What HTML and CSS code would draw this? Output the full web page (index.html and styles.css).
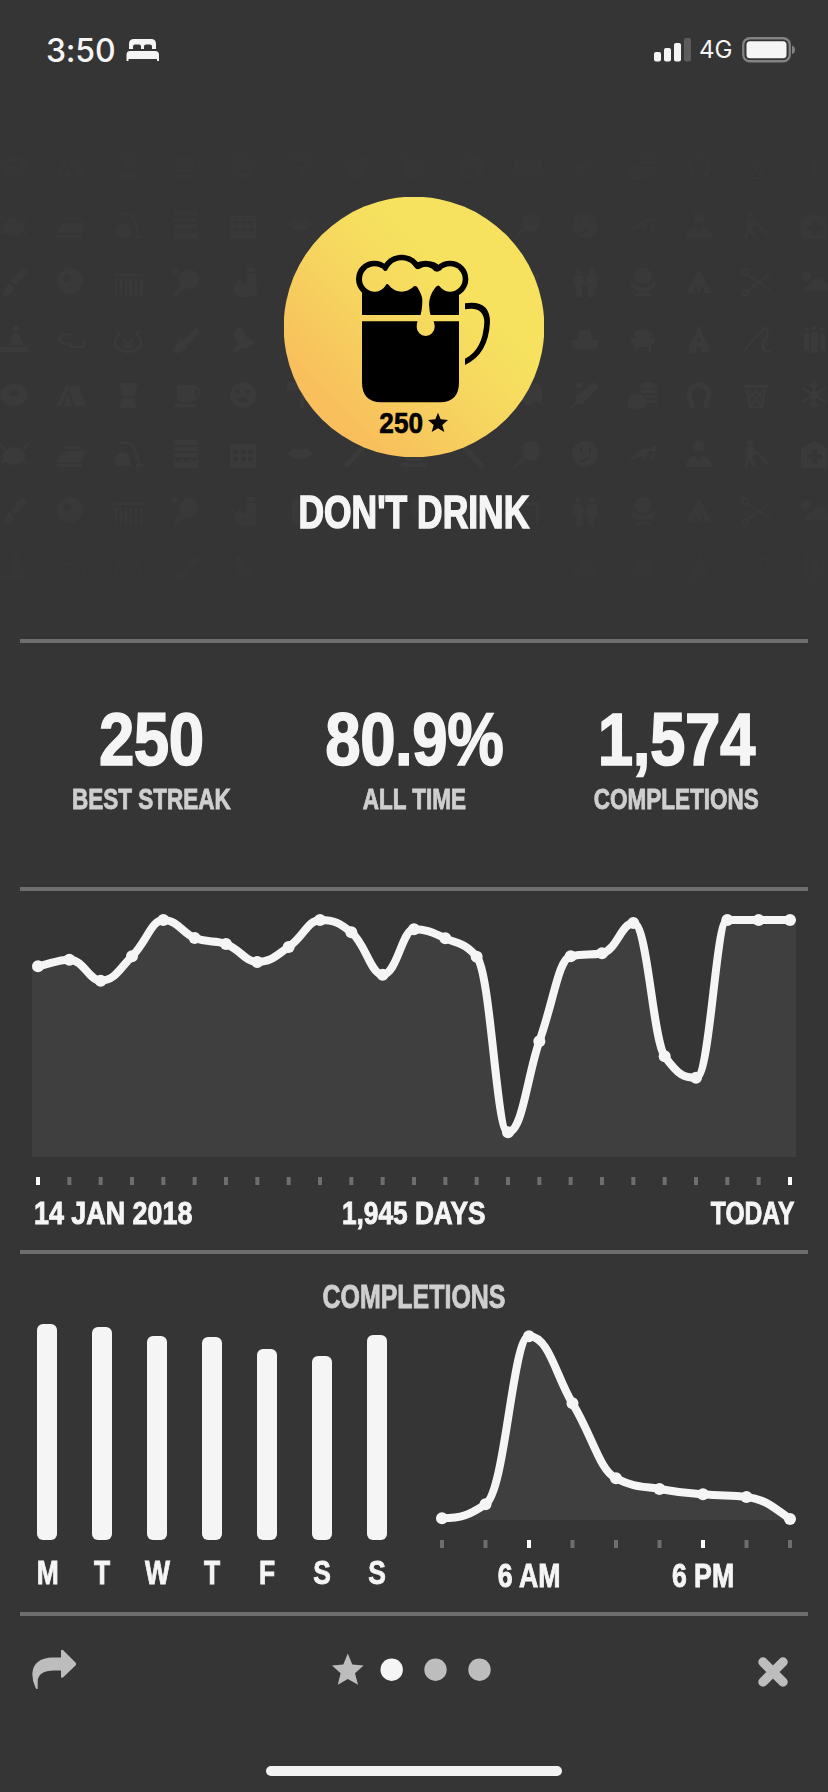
FILE: index.html
```html
<!DOCTYPE html>
<html lang="en">
	<head>
		<meta charset="utf-8">
		<title>Don't Drink</title>
		<link rel="stylesheet" href="styles.css">
	</head>
	<body>

		<header class="status">
			<span class="time">3:50</span>
			<svg class="bed" width="33" height="24" viewBox="0 0 33 24">
				<path d="M3 11V6q0-5 5-5h17q5 0 5 5v5h-4V8.500q0-2-2-2h-4q-2 0-2 2V11h-3V8.500q0-2-2-2H9q-2 0-2 2V11z"/>
				<path d="M4 13h25q4 0 4 4v6h-2v-2H2.500v2H.5v-6q0-4 3.500-4z"/>
			</svg>
			<svg class="signal" width="38" height="24" viewBox="0 0 38 24">
				<rect x="0" y="14" width="7" height="9.500" rx="2"/>
				<rect x="10" y="10" width="7" height="13.500" rx="2"/>
				<rect x="20" y="5" width="7" height="18.500" rx="2"/>
				<rect class="dim" x="30" y="0" width="7" height="23.500" rx="2"/>
			</svg>
			<span class="network">4G</span>
			<svg class="battery" width="54" height="26" viewBox="0 0 54 26">
				<rect x="1.250" y="1.250" width="46.500" height="23" rx="6.500" fill="none" stroke="#828282" stroke-width="2.300"/>
				<rect x="4.500" y="4.300" width="40" height="17" rx="3.500"/>
				<path d="M50 8.500q3 1 3 4.300t-3 4.300z" fill="#828282"/>
			</svg>
		</header>

		<section class="hero">
			<svg class="pattern" width="828" height="480" viewBox="0 140 828 480">
				<defs>
					<!-- four rows of icons, repeated below -->
					<g id="tile">
						<!-- row 1 -->
						<g transform="translate(14 166)"><path fill-rule="evenodd" d="M-14 0a14 11 0 1 0 28 0a14 11 0 1 0-28 0M-5-2a5 3 0 1 0 10 0a5 3 0 1 0-10 0"/></g>
						<g transform="translate(71 166)"><path d="M-6-9H8l7 20H4L-2-6l-8 17h-4zM-3-2l4 13h-8z"/></g>
						<g transform="translate(128 166)"><path d="M-10-12H10l-3 13H-6l-2-9zM-6 3H6l3 10H-9z"/></g>
						<g transform="translate(186 166)"><path d="M-9-10H9V3q-2 4-5 4h-8q-4 0-5-4zM-12 9h22v3h-22z"/><path class="line" d="M9-7q6 1 4 6T8 4"/></g>
						<g transform="translate(243 166)"><path fill-rule="evenodd" d="M0-13a13 13 0 1 0 .1 0M-8-5h5v3h-5zM3-5h5v3H3zM-5 7a5 5 0 0 1 10 0z"/></g>
						<g transform="translate(300 166)"><path d="M-13-13H11v8h-24zM0 0h4v13H0z"/><path class="line" d="M11-9h3v6L2-1"/></g>
						<g transform="translate(357 166)"><path d="M0 14C-20 2-12-12-5-10q4 1 5 4q1-3 5-4C12-12 20 2 0 14z"/></g>
						<g transform="translate(414 166)"><circle r="11" cy="2"/><circle r="4" cx="-9" cy="-8"/><circle r="4" cx="9" cy="-8"/></g>
						<g transform="translate(471 166)"><path fill-rule="evenodd" d="M0-13a13 13 0 1 0 .1 0M-6-5h3v3h-3zM3-5h3v3H3zM-7 3a7 7 0 0 0 14 0z"/></g>
						<g transform="translate(528 166)"><path d="M-14-8l6-5 8 6 8-6 6 5v18l-7-4-7 5-7-5-7 4z"/></g>
						<g transform="translate(585 166)"><path d="M9-13l5 5L-3 9l-6 0-5 5-1-1 6-7 0-5z"/><circle r="3" cx="-6" cy="-10"/></g>
						<g transform="translate(643 166)"><ellipse cx="5" cy="-9" rx="9" ry="4"/><path d="M-3-5h17v3H-3zM3 0h11v3H3zM3 5h11v3H3z"/><ellipse cx="-6" cy="3" rx="9" ry="4"/><path d="M-15 5H3v7q-9 5-18 0z"/></g>
						<g transform="translate(699 166)"><path class="thick" d="M-7 13v-5q-5-8-2-13q9-11 18 0q3 5-2 13v5"/></g>
						<g transform="translate(756 166)"><path d="M-12-10h24v3h-24z"/><path class="line" d="M-9-6l3 18H6L9-6M-6-4L5 10M6-4L-5 10M-1-5l7 8M1-5l-8 8"/></g>
						<g transform="translate(814 166)"><path class="line" d="M0-14v28M-12-7L12 7M12-7L-12 7M-4-11l4 4 4-4M-4 11l4-4 4 4"/><circle r="4"/></g>
						<!-- row 2 -->
						<g transform="translate(14 225)"><ellipse rx="11" ry="9" cy="2"/><path class="line" d="M-9-4l-5-6M9-4l5-6M-9 6l-4 3M9 6l4 3"/></g>
						<g transform="translate(71 225)"><path d="M-8-8H10v3H-5zM-14 8q2-10 10-11H14L11 8zM-14 10h25v3h-25z"/></g>
						<g transform="translate(128 225)"><path d="M-13 12q-1-14 8-14q8 1 8 14zM8 10h7v3H8z"/><path class="line" d="M-8-11q12-2 14 5l5 15"/></g>
						<g transform="translate(186 225)"><path d="M-12-14H12v5h-24zM-12-7H12v4h-24zM-12-1H12v4h-24zM-12 5l4 4 4-4 4 4 4-4 4 4 4-4v9h-24z"/></g>
						<g transform="translate(243 225)"><path fill-rule="evenodd" d="M-13-10h26v24h-26zM-10-4h5v4h-5zM-2-4h5v4h-5zM5-4h5v4H5zM-10 3h5v4h-5zM-2 3h5v4h-5zM5 3h5v4H5z"/></g>
						<g transform="translate(300 225)"><path d="M-13 0q7-7 10-5l3 1 3-1q4-2 10 5q-13 11-26 0z"/></g>
						<g transform="translate(357 225)"><path class="thick" d="M-12 13L10-11"/></g>
						<g transform="translate(414 225)"><path d="M-13 9h26v4h-26zM-8 2H8v5H-8z"/></g>
						<g transform="translate(471 225)"><path class="thick" d="M-9-9L12 13"/></g>
						<g transform="translate(528 225)"><ellipse cx="3" cy="-3" rx="9" ry="10"/><path class="line" d="M-4 4l-10 10"/></g>
						<g transform="translate(585 225)"><path fill-rule="evenodd" d="M0-13a13 13 0 1 0 .1 0M-5-6h2v5h-2zM4-6h2v5H4zM-5 7l9-4v2l-8 4z"/></g>
						<g transform="translate(643 225)"><path d="M-15 6L0-5l9-1 2 3-7 1-1 7h-3V1L-7 5zM8 5l2-6 2 0-1 6z"/><circle r="3" cx="11" cy="-5"/></g>
						<g transform="translate(699 225)"><circle r="6" cy="-8"/><path d="M-13 13q0-10 9-11L0 8l4-6q9 1 9 11z"/></g>
						<g transform="translate(756 225)"><circle r="3" cx="-6" cy="-11"/><path d="M-9-7h6l3 7-2 1-2 2 5 10h-4L-7 6l-2 8h-3l3-10v-6l-3 2z"/><path class="line" d="M0-3l13 15"/></g>
						<g transform="translate(814 225)"><path fill-rule="evenodd" d="M-13-6L0-13l13 7v20h-26zM-2-5h5v5h5v5H3v5h-5V5h-5V0h5z"/></g>
						<!-- row 3 -->
						<g transform="translate(14 282)"><path d="M8-14l6 4L2 3-4-1zM-5 1l5 4q-1 9-12 9 3-9 7-13z"/></g>
						<g transform="translate(71 282)"><path fill-rule="evenodd" d="M-1-14a13 13 0 1 0 .1 0M-4-8a4 4 0 1 0 .1 0"/></g>
						<g transform="translate(128 282)"><path class="line" d="M-13-7h28M-12-3v17M-7-3v17M-2-3v17M3-3v17M8-3v17M13-3v17"/></g>
						<g transform="translate(186 282)"><circle r="10" cx="3" cy="-3"/><path d="M-5 2l4 4-9 9-3-3z"/><circle r="3" cx="-11" cy="-11"/></g>
						<g transform="translate(243 282)"><path d="M-14-1L-8 3l4-5 5 5 3-2v-9h9l1 21q-12 4-18 1-7-2-6-15zM4-14h8v4H4z"/></g>
						<g transform="translate(300 282)"><path d="M-8-12h7V6q9 1 10 7H-8z"/></g>
						<g transform="translate(357 282)"><path class="line" d="M-12 4a12 12 0 0 1 24 0M-5 4a5 5 0 0 1 10 0"/></g>
						<g transform="translate(414 282)"><path d="M-3-12h8L4 0l-4 12-3-12z"/></g>
						<g transform="translate(471 282)"><path d="M0-12l12 10L0 12-12-2z"/></g>
						<g transform="translate(528 282)"><path class="line" d="M-12-7h24M-9-7v20M9-7v20"/></g>
						<g transform="translate(585 282)"><circle r="3" cx="-7" cy="-11"/><circle r="3" cx="7" cy="-11"/><path d="M-11-7h8l3 8 3-8h8l2 11h-3l-1 11H3L2 0l-2 5-2-5-1 15h-6l-1-11h-3z"/></g>
						<g transform="translate(643 282)"><ellipse rx="9" ry="8" cy="-6"/><path d="M-12-2q3 7 12 7t12-7v6Q9 9 0 9t-12-5zM-8 12Q0 8 8 12v2H-8z"/></g>
						<g transform="translate(699 282)"><path fill-rule="evenodd" d="M0-13l13 24h-26zM-5 5h3v6h-3zM2 5h3v6H2z"/></g>
						<g transform="translate(756 282)"><path class="line" d="M-9-8L14 8M-9 9L14-8"/><circle class="line" r="3" cx="-11" cy="-10"/><circle class="line" r="3" cx="-11" cy="11"/></g>
						<g transform="translate(814 282)"><circle r="5" cx="-8" cy="-6"/><path d="M-9 9q0-7 6-7q2-8 10-6q8 3 7 13z"/></g>
						<!-- row 4 -->
						<g transform="translate(14 340)"><circle r="3" cx="2" cy="-12"/><path d="M-1-8h5l6 13H-4zM-14 7h28v5h-28z"/></g>
						<g transform="translate(71 340)"><path class="line" d="M-8-7l-4 6 4 5q9-2 8 3h12l1-8M-7-5l8-1"/></g>
						<g transform="translate(128 340)"><path class="line" d="M-12-9l4 3q-8 6-4 13 12 10 24 0 4-7-4-13l4-3M-5-1l9 9M5-1l-9 9"/></g>
						<g transform="translate(186 340)"><path d="M10-13l4 5L1 5l1 3-9 5h-6l1-7 7-7 2 2z"/></g>
						<g transform="translate(243 340)"><path d="M-6-13l6 2 4 9 7 3-1 4-6 4-5-1-6 5-3-3 5-6-5-9z"/></g>
						<g transform="translate(585 340)"><path d="M-14 0h6l3-11 5 2 5-2L8 0h6l-1 7q-13 6-26 0z"/></g>
						<g transform="translate(643 340)"><ellipse rx="10" ry="4" cy="-6"/><path d="M-12-2h24v5L8 5v7H6L5 7H-5l-3 5V5l-4-2z"/></g>
						<g transform="translate(699 340)"><path fill-rule="evenodd" d="M-1-14h2l2 7 4 6v4l3 3v6H3V7h-6v6h-7V6l3-3v-4l4-6zM-2-2h4v4h-4z"/></g>
						<g transform="translate(756 340)"><path class="line" d="M-13 12L9-13M9-13q6 8-1 13-4 12 7 12"/></g>
						<g transform="translate(814 340)"><path d="M-10-7h5V11h-5zM-3-8h7V13h-7zM6-7h5V11H6z"/><circle r="2" cx="-7" cy="-11"/><circle r="2" cy="-12"/><circle r="2" cx="8" cy="-11"/></g>
					</g>
				</defs>
				<use href="#tile"/>
				<use href="#tile" y="229"/>
			</svg>

			<svg class="badge" width="260" height="260" viewBox="42 50 780 780">
				<defs>
					<linearGradient id="gold" gradientUnits="userSpaceOnUse" x1="190" y1="680" x2="560" y2="310">
						<stop offset="0" stop-color="#f8bf5c"/>
						<stop offset=".5" stop-color="#f6d35f"/>
						<stop offset="1" stop-color="#f6e25f"/>
					</linearGradient>
				</defs>
				<circle cx="432" cy="440" r="391" fill="url(#gold)"/>
				<!-- glass -->
				<path d="M276 310H567V404H276z"/>
				<path d="M276 423H567V606Q567 666 510 666H334Q276 666 276 606z"/>
				<!-- foam -->
				<circle cx="313" cy="296" r="55"/>
				<circle cx="395" cy="287" r="64"/>
				<circle cx="467" cy="308" r="67"/>
				<circle cx="540" cy="296" r="55"/>
				<g fill="url(#gold)">
					<circle cx="314" cy="296" r="38"/>
					<circle cx="395" cy="287" r="47"/>
					<circle cx="540" cy="296" r="38"/>
					<path d="M340 271Q349 275 356 266L434 262Q440 269 449 265Q467 254 486 265Q498 280 512 270L515 322Q504 308 495 323Q478 345 477 372Q478 396 484 413Q494 423 494 440A27 27 0 0 1 440 440Q440 422 449 412Q457 390 457 360Q457 345 442 321Q434 312 425 324L364 322Q352 300 336 323z"/>
				</g>
				<!-- handle -->
				<path d="M585 369Q660 358 660 426Q655 522 585 554V535Q639 508 643 424Q640 377 585 387z"/>
				<text class="badge-count" x="328" y="759" textLength="131" lengthAdjust="spacingAndGlyphs">250</text>
				<path d="M504 697l8 20 22 2-17 15 6 21-19-11-19 11 6-21-17-15 22-2z"/>
			</svg>
			<h1 class="title">DON'T DRINK</h1>
		</section>

		<section class="panel stats">
			<div class="stat">
				<div class="value">250</div>
				<div class="label">BEST STREAK</div>
			</div>
			<div class="stat">
				<div class="value">80.9%</div>
				<div class="label">ALL TIME</div>
			</div>
			<div class="stat">
				<div class="value">1,574</div>
				<div class="label">COMPLETIONS</div>
			</div>
		</section>

		<section class="panel history">
			<svg class="chart" id="history_chart" width="764" height="294"></svg>
			<div class="range">
				<span class="from">14 JAN 2018</span>
				<span class="days">1,945 DAYS</span>
				<span class="to">TODAY</span>
			</div>
		</section>

		<section class="panel completions">
			<h2 class="heading">COMPLETIONS</h2>
			<div class="row">
				<div class="week" id="week"></div>
				<div class="day">
					<svg class="chart" id="day_chart" width="360" height="233"></svg>
					<div class="hours">
						<span>6 AM</span>
						<span>6 PM</span>
					</div>
				</div>
			</div>
		</section>

		<footer class="panel footer">
			<svg width="46" height="42" viewBox="31 1649 46 42">
				<path d="M61 1650.500q1-1.500 2.500 0L75.500 1662.500q1.500 1.500 0 3L63.500 1677q-1.500 1.500-2.500 0V1670.500H54Q38.500 1670.500 37.700 1681L37.700 1688.500Q36.700 1690 35.700 1688Q32.300 1681 32.300 1674Q33 1658 53 1657.500H61z"/>
			</svg>
			<svg class="pager" width="160" height="42" viewBox="331 1649 160 42">
				<path d="M347.800 1653.500L352.300 1664.600 363.600 1665.600 355 1673.200 358 1684.700 347.800 1679 337.800 1684.700 340.600 1673.200 332 1665.600 343.300 1664.600z"/>
				<circle class="current" cx="391.700" cy="1669.700" r="11.200"/>
				<circle cx="435.500" cy="1669.700" r="11.200"/>
				<circle cx="479.500" cy="1669.700" r="11.200"/>
			</svg>
			<svg class="close" width="32" height="32" viewBox="-16 -16 32 32">
				<path d="M-10-10L10 10M10-10L-10 10" stroke-width="9.500" stroke-linecap="round"/>
			</svg>
		</footer>
		<div class="home"></div>

		<script src="charts.js"></script>
	</body>
</html>
```

FILE: styles.css
```css
* {
	box-sizing: border-box;
}
body {
	margin: 0;
	width: 828px;
	height: 1792px;
	overflow: hidden;
	display: flex;
	flex-direction: column;
	font-family: "Liberation Sans", Arial, sans-serif;
	font-weight: bold;
	color: #f5f5f5;
	background-color: #353535;
	-webkit-text-stroke: .9px;
}
svg {
	display: block;
	flex: none;
}

/* status bar */
.status {
	display: flex;
	align-items: center;
	height: 100px;
	padding: 0 32px 0 46px;
	font-family: Inter, sans-serif;
	fill: #f5f5f5;
	-webkit-text-stroke: 0;
}
.time {
	width: 80px;
	font-size: 32px;
	font-weight: 500;
	letter-spacing: -.2px;
}
.signal {
	margin-left: auto;
}
.signal .dim {
	fill: #5c5c5c;
}
.network {
	width: 43px;
	margin-left: 7px;
	font-size: 24px;
	font-weight: 400;
	line-height: 30px;
}

/* hero */
.hero {
	position: relative;
	display: flex;
	flex-direction: column;
	align-items: center;
	height: 539px;
	padding-top: 97px;
}
.pattern {
	position: absolute;
	left: 0;
	top: 40px;
	fill: #3a3a3a;
	-webkit-mask-image: linear-gradient(rgba(0,0,0,.2) 0, #000 160px, #000 340px, rgba(0,0,0,.2) 450px);
	mask-image: linear-gradient(rgba(0,0,0,.2) 0, #000 160px, #000 340px, rgba(0,0,0,.2) 450px);
}
.pattern .line {
	fill: none;
	stroke: #3a3a3a;
	stroke-width: 2.5;
}
.pattern .thick {
	fill: none;
	stroke: #3a3a3a;
	stroke-width: 5;
}
.badge {
	position: relative;
}
.badge-count {
	font-size: 90px;
	font-weight: bold;
	stroke: #000;
	stroke-width: 2;
}
.title {
	position: relative;
	margin: 30px 0 0;
	font-size: 46px;
	line-height: 50px;
	white-space: nowrap;
	transform: scaleX(.77);
	-webkit-text-stroke: 1.6px;
}

/* panels */
.panel {
	margin: 0 20px;
	border-top: 4px solid #6e6e6e;
}
.stats {
	display: grid;
	grid-template-columns: repeat(3, 1fr);
	height: 248px;
	padding-top: 57px;
	text-align: center;
}
.value {
	font-size: 74px;
	line-height: 80px;
	transform: scaleX(.86);
	letter-spacing: -.5px;
	-webkit-text-stroke: 1.6px;
}
.label {
	margin-top: 3px;
	font-size: 30px;
	line-height: 32px;
	color: #cfcfcf;
	transform: scaleX(.75);
}

.chart .area {
	fill: #3f3f3f;
}
.chart .curve {
	fill: none;
	stroke: #f5f5f5;
	stroke-width: 8;
}
.chart .dot {
	fill: #f5f5f5;
}
.chart .tick {
	fill: #6e6e6e;
}
.chart .tick.on {
	fill: #fff;
}

.history {
	height: 363px;
	padding: 0 12px;
}
.range {
	display: grid;
	grid-template-columns: 1fr 1fr 1fr;
	margin-top: 11px;
	padding: 0 2px;
	font-size: 32px;
	line-height: 34px;
	white-space: nowrap;
}
.from {
	transform: scaleX(.84);
	transform-origin: left;
}
.days {
	text-align: center;
	transform: scaleX(.82);
}
.to {
	text-align: right;
	transform: scaleX(.77);
	transform-origin: right;
}

.completions {
	height: 362px;
	padding-top: 25px;
}
.heading {
	margin: 0;
	font-size: 33.5px;
	line-height: 36px;
	text-align: center;
	color: #cfcfcf;
	transform: scaleX(.745);
}
.row {
	display: flex;
	justify-content: space-between;
	padding-right: 12px;
}
.week {
	display: flex;
	width: 384px;
}
.weekday {
	flex: 1;
	display: flex;
	flex-direction: column;
	align-items: center;
	font-size: 33px;
	line-height: 36px;
}
.weekday span {
	transform: scaleX(.8);
}
.track {
	display: flex;
	align-items: flex-end;
	height: 225px;
	margin-bottom: 15px;
}
.bar {
	width: 20px;
	border-radius: 6px;
	background-color: #f5f5f5;
}
.hours {
	display: grid;
	grid-template-columns: 1fr 1fr;
	margin-top: 11px;
	padding: 0 6px;
	font-size: 32.5px;
	line-height: 34px;
	text-align: center;
}
.hours span {
	transform: scaleX(.82);
}

/* footer */
.footer {
	display: flex;
	align-items: center;
	justify-content: space-between;
	height: 112px;
	padding: 0 19px 0 11px;
	fill: #bdbdbd;
}
.pager {
	margin-right: 12px;
}
.pager .current {
	fill: #f5f5f5;
}
.close {
	margin-top: 4px;
	stroke: #bdbdbd;
}
.home {
	width: 296px;
	height: 10px;
	margin: 42px auto 0;
	border-radius: 5px;
	background-color: #f3f3f3;
}
```

FILE: charts.js
```js
// y positions of the points, in px from the top of the chart
const history_points = [75.3, 68.7, 89.7, 65.3, 29, 47, 53, 71, 56, 29, 41.3, 83.7, 38.3, 47.3, 65.7, 241.3, 150.3, 65.2, 62.3, 32, 165.3, 186.7, 29, 29, 29];
const day_points = [203.3, 189.3, 21.3, 88.3, 163.3, 174, 179.3, 182, 204];
const week = [['M', 216], ['T', 213], ['W', 204], ['T', 203], ['F', 191], ['S', 184], ['S', 205]];

// monotone cubic through the points, so peaks never overshoot
function curvePath(ys, step) {
	const s = [];
	for (let i = 0; i < ys.length - 1; i++) {
		s.push((ys[i + 1] - ys[i]) / step);
	}
	const m = ys.map((y, i) => {
		if (i == 0 || i == ys.length - 1) return 0;
		const a = s[i - 1];
		const b = s[i];
		if (a * b <= 0) return 0;
		return Math.sign(a) * Math.min(Math.abs(a), Math.abs(b), Math.abs(a + b) / 4) * 2;
	});
	// the end points take their slope from the neighbour
	const last = ys.length - 1;
	m[0] = s[0] - m[1] / 2;
	m[last] = (3 * s[last - 1] - m[last - 1]) / 2;

	// longer handle on the way out of a point than on the way in
	const out = step * .46;
	const into = step * .38;
	let d = `M6 ${ys[0]}`;
	for (let i = 0; i < last; i++) {
		const x = 6 + i * step;
		d += `C${x + out} ${ys[i] + m[i] * out} ${x + step - into} ${ys[i + 1] - m[i + 1] * into} ${x + step} ${ys[i + 1]}`;
	}
	return d;
}

function drawChart(id, ys, bottom, tick_top, lit) {
	const svg = document.getElementById(id);
	const width = svg.getAttribute('width');
	const step = (width - 12) / (ys.length - 1);
	const d = curvePath(ys, step);

	let html = `<path class="area" d="${d}H${width}V${bottom}H0V${ys[0]}H6z"/>`;
	html += `<path class="curve" d="${d}"/>`;
	ys.forEach((y, i) => {
		const x = 6 + i * step;
		html += `<circle class="dot" cx="${x}" cy="${y}" r="6"/>`;
		html += `<rect class="tick${lit.includes(i) ? ' on' : ''}" x="${x - 2}" y="${tick_top}" width="4" height="8"/>`;
	});
	svg.innerHTML = html;
}

drawChart('history_chart', history_points, 266, 286, [0, 24]);
drawChart('day_chart', day_points, 205, 225, [2, 6]);

document.getElementById('week').innerHTML = week.map(([day, height]) =>
	`<div class="weekday"><div class="track"><div class="bar" style="height: ${height}px"></div></div><span>${day}</span></div>`
).join('');
```
